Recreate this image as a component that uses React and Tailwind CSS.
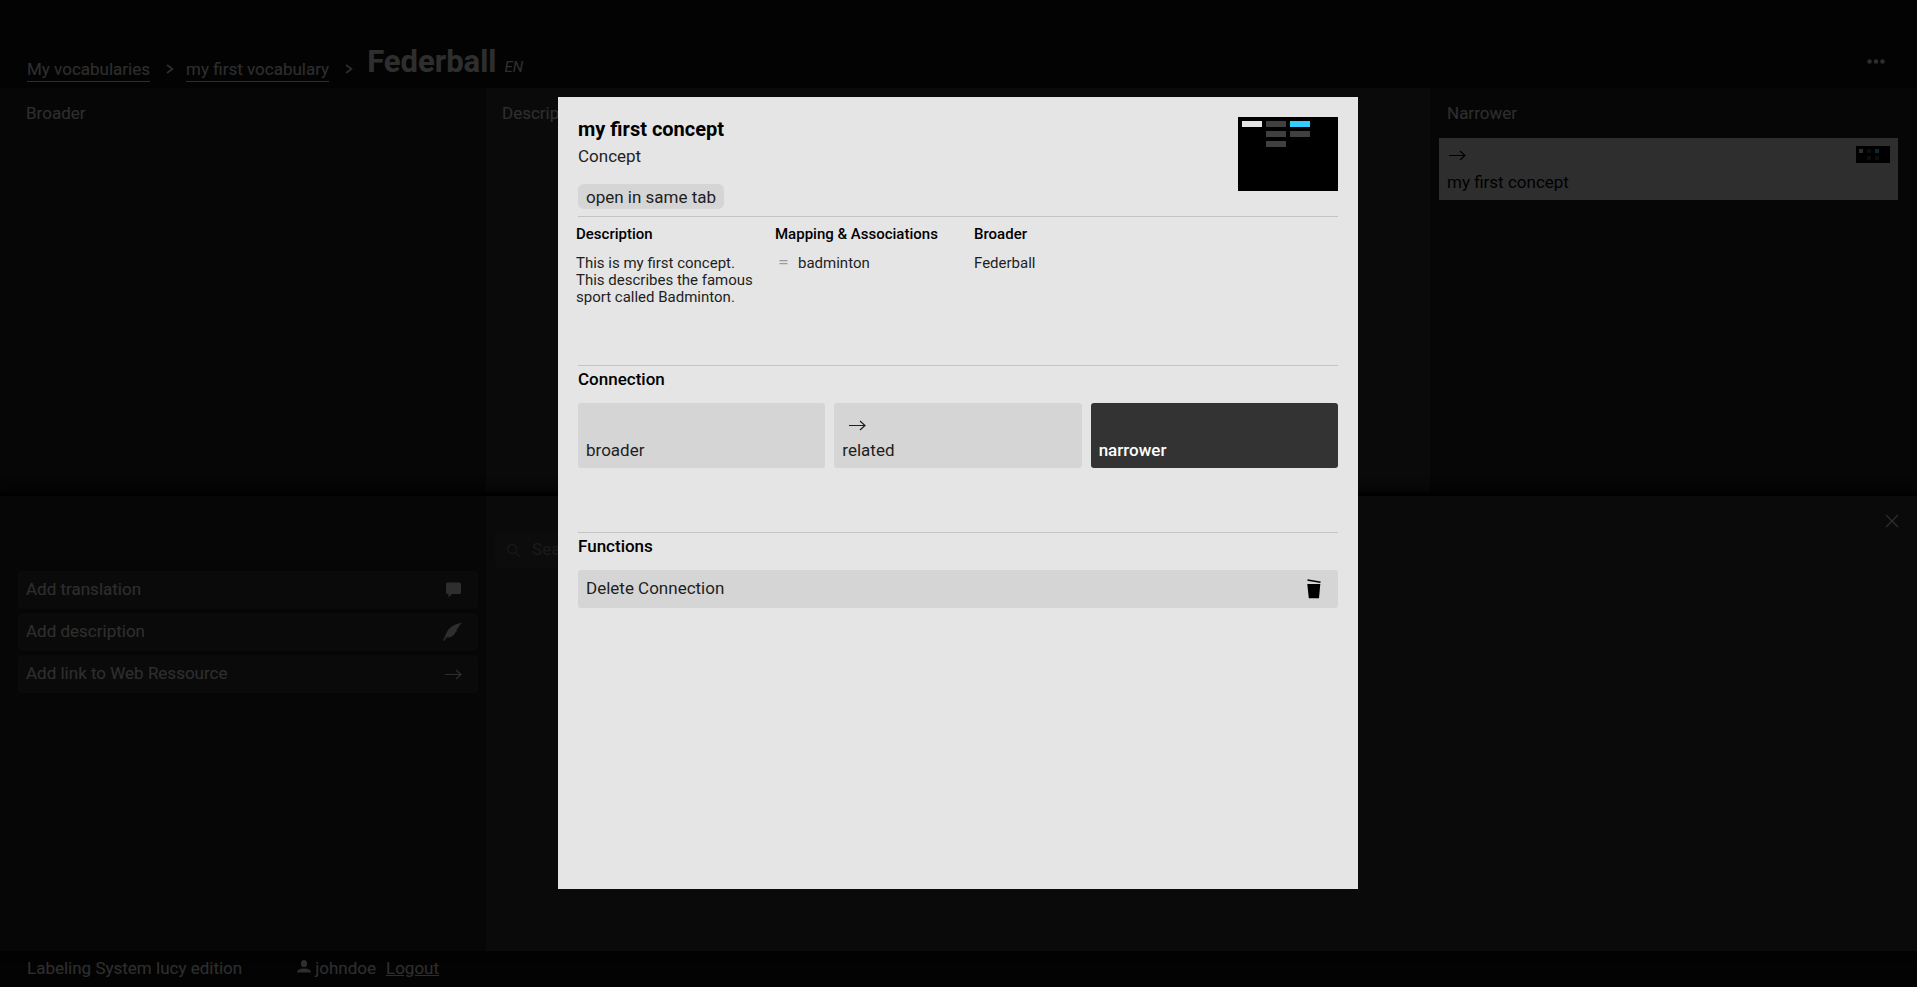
import React from "react";

const ArrowIcon = ({ className }) => (
  <svg className={className} viewBox="0 0 17 11" width="17" height="11" fill="none" stroke="currentColor" strokeWidth="1.2" aria-hidden="true">
    <path d="M0 5.500H16M11 1L16 5.500L11 10" />
  </svg>
);

const ChevronIcon = () => (
  <svg viewBox="0 0 8 10" width="8" height="10" fill="none" stroke="currentColor" strokeWidth="1.600" aria-hidden="true">
    <path d="M1 1L6.500 5L1 9" />
  </svg>
);

const BubbleIcon = () => (
  <svg viewBox="0 0 16 16" width="16" height="16" fill="currentColor" aria-hidden="true">
    <path d="M1.800 0.500H13.200Q15 0.500 15 2.300V10.200Q15 12 13.200 12H6L2.500 15.500V12H1.800Q0 12 0 10.200V2.300Q0 0.500 1.800 0.500Z" />
  </svg>
);

const FeatherIcon = () => (
  <svg viewBox="0 0 19 18" width="19" height="18" fill="currentColor" aria-hidden="true">
    <path d="M19 0C12 0.500 5.500 4.500 3 11C2.300 13.200 1 15.500 0 17.300L0.900 18L3.800 14.200C6.500 14.400 8.500 14.200 9.800 13L8.500 12.600C10 12.300 11.500 11.600 12.200 10.400L10.800 10.200C12.300 9.800 13.500 8.800 14.200 7.400L12.900 7.200C15.500 5.800 15.500 2.500 19 0Z" />
  </svg>
);

const UserIcon = () => (
  <svg className="mb-1" viewBox="0 0 14 13" width="14" height="13" fill="currentColor" aria-hidden="true">
    <ellipse cx="7" cy="3.700" rx="3" ry="3.600" />
    <path d="M0 12.500C0 9.800 3.500 8.600 7 8.600S14 9.800 14 12.500Z" />
  </svg>
);

const TrashIcon = () => (
  <svg viewBox="0 0 14 20" width="14" height="20" aria-hidden="true">
    <path d="M0.500 1L13.500 3.200" stroke="#000" strokeWidth="1.500" />
    <path d="M0.300 5H13.300L12 19.300H1.800Z" fill="#000" />
  </svg>
);

const actions = [
  { label: "Add translation", icon: <BubbleIcon /> },
  { label: "Add description", icon: <FeatherIcon /> },
  { label: "Add link to Web Ressource", icon: <ArrowIcon /> },
];

const sectionTitle = "border-t border-[#c3c3c3] pt-[3px] leading-5 font-medium text-black";
const relationButton = "flex h-[65px] flex-col items-start justify-end rounded-[3px] px-2 pb-1.5 leading-6";

function Vocabulary() {
  return (
    <div className="grid min-h-screen grid-rows-[88px_405fr_458fr_36px] bg-[#0f0f0f] text-[17px] text-[#e5e5e5]">
      <header className="flex items-end justify-between pr-8 pl-[27px]">
        <nav aria-label="Breadcrumb" className="flex items-end gap-4 pb-1.5">
          <a href="#vocabularies" className="border-b border-current leading-6">My vocabularies</a>
          <span className="pb-2"><ChevronIcon /></span>
          <a href="#vocabulary" className="-ml-1 border-b border-current leading-6">my first vocabulary</a>
          <span className="pb-2"><ChevronIcon /></span>
          <h1 className="-ml-0.5 flex items-baseline gap-2 pb-1 text-[31px] leading-8 font-bold">
            Federball <span className="text-[15px] leading-5 font-normal italic">EN</span>
          </h1>
        </nav>
        <button type="button" aria-label="More" className="mb-6">
          <svg viewBox="0 0 18 5" width="18" height="5" fill="currentColor">
            <circle cx="2.500" cy="2.500" r="2.200" /><circle cx="9" cy="2.500" r="2.200" /><circle cx="15.500" cy="2.500" r="2.200" />
          </svg>
        </button>
      </header>

      <main className="grid grid-cols-[486fr_944fr_487fr]">
        <section className="bg-[#1e1e1e] px-[26px] pt-[13px]">
          <h2 className="leading-6">Broader</h2>
        </section>
        <section className="bg-[#323232] px-4 pt-[13px]">
          <h2 className="leading-6">Description</h2>
        </section>
        <section className="bg-[#1e1e1e] pt-[13px] pr-[19px] pl-[9px]">
          <h2 className="pl-2 leading-6">Narrower</h2>
          <a href="#concept" className="mt-[13px] flex h-[62px] items-start justify-between bg-[#e5e5e5] p-2 text-black">
            <span className="flex flex-col gap-[9px] pt-1">
              <ArrowIcon className="ml-0.5" />
              <span className="leading-6">my first concept</span>
            </span>
            <svg viewBox="0 0 34 17" width="34" height="17" aria-hidden="true">
              <path fill="#000" d="M0 0H34V17H0Z" />
              <path fill="#e5e5e5" d="M3 3H7V7H3Z" />
              <path fill="#404040" d="M11 3H15V7H11ZM11 10H15V14H11ZM19 10H23V14H19Z" />
              <path fill="#33ccff" d="M19 3H23V7H19Z" />
            </svg>
          </a>
        </section>
      </main>

      <section className="grid grid-cols-[486fr_1431fr] border-t-3 border-black shadow-[0_-2px_10px_#000]">
        <div className="flex flex-col gap-1 bg-[#1e1e1e] pt-[75px] pr-2 pl-[18px]">
          {actions.map((a) => (
            <button key={a.label} type="button" className="flex h-[38px] items-center justify-between rounded-[3px] bg-[#323232] pr-4 pl-2">
              {a.label}
              {a.icon}
            </button>
          ))}
        </div>
        <div className="flex items-start justify-between bg-[#323232] pr-[18px] pl-[9px]">
          <label className="mt-9 flex h-9 w-96 items-center gap-3 rounded-[3px] bg-[#3c3c3c] px-3 text-[#808080]">
            <svg viewBox="0 0 14 15" width="14" height="15" fill="none" stroke="currentColor" strokeWidth="1.200" aria-hidden="true">
              <circle cx="5.500" cy="5.800" r="4.800" /><path d="M9 9.500L13.500 14.300" />
            </svg>
            <input type="search" aria-label="Search" placeholder="Search" className="w-full placeholder:text-[#808080]" />
          </label>
          <button type="button" aria-label="Close" className="mt-[18px]">
            <svg viewBox="0 0 14 14" width="14" height="14" stroke="currentColor" strokeWidth="1.200"><path d="M1 1L13 13M13 1L1 13" /></svg>
          </button>
        </div>
      </section>

      <footer className="flex items-center pb-0.5 pl-[27px] leading-6">
        <span>Labeling System lucy edition</span>
        <span className="ml-[55px] flex items-center gap-1"><UserIcon />johndoe</span>
        <a href="#logout" className="ml-2.5 underline">Logout</a>
      </footer>
    </div>
  );
}

function ConceptDialog() {
  return (
    <div className="fixed inset-0 flex items-center justify-center bg-black/80 pr-px pb-px">
      <div role="dialog" aria-modal="true" aria-labelledby="concept-title" className="h-[792px] w-[800px] bg-[#e5e5e5] p-5 text-[17px] text-[#1e1e1e]">
        <div className="flex items-start justify-between">
          <div className="flex flex-col items-start">
            <h2 id="concept-title" className="text-xl leading-6 font-bold text-black">my first concept</h2>
            <p className="mt-[3px] leading-6">Concept</p>
            <button type="button" className="mt-4 h-[25px] rounded-md bg-[#d5d5d5] px-2 leading-6">open in same tab</button>
          </div>
          <svg viewBox="0 0 100 74" width="100" height="74" aria-hidden="true">
            <path fill="#000" d="M0 0H100V74H0Z" />
            <path fill="#e5e5e5" d="M4 4H24V10H4Z" />
            <path fill="#404040" d="M28 4H48V10H28ZM28 14H48V20H28ZM28 24H48V30H28ZM52 14H72V20H52Z" />
            <path fill="#33ccff" d="M52 4H72V10H52Z" />
          </svg>
        </div>

        <div className="mt-[7px] border-t border-[#c3c3c3]">
          <div className="-mr-3.5 -ml-0.5 grid h-[148px] grid-cols-4 gap-5 pt-[9px] text-[15px] leading-[17px]">
            <section>
              <h3 className="mb-3 font-medium text-black">Description</h3>
              <p>This is my first concept. This describes the famous sport called Badminton.</p>
            </section>
            <section>
              <h3 className="mb-3 font-medium whitespace-nowrap text-black">Mapping &amp; Associations</h3>
              <p className="flex items-center gap-2.5 pl-1">
                <svg viewBox="0 0 9 7" width="9" height="7" fill="#999" aria-hidden="true"><path d="M0.500 0H8.500V1.200H0.500ZM0.500 3H8.500V4.200H0.500Z" /></svg>
                badminton
              </p>
            </section>
            <section>
              <h3 className="mb-3 font-medium text-black">Broader</h3>
              <p>Federball</p>
            </section>
          </div>
        </div>

        <section className="h-[167px]">
          <h3 className={sectionTitle}>Connection</h3>
          <div className="mt-3.5 grid grid-cols-3 gap-[9px]">
            <button type="button" className={`${relationButton} bg-[#d5d5d5]`}>broader</button>
            <button type="button" className={`${relationButton} bg-[#d5d5d5]`}>
              <ArrowIcon className="mb-[7px] ml-[7px]" />
              related
            </button>
            <button type="button" aria-pressed="true" className={`${relationButton} bg-[#333] font-medium text-white`}>narrower</button>
          </div>
        </section>

        <section>
          <h3 className={sectionTitle}>Functions</h3>
          <button type="button" className="mt-3.5 flex h-[38px] w-full items-center justify-between rounded-[3px] bg-[#d5d5d5] pr-[17px] pl-2">
            Delete Connection
            <TrashIcon />
          </button>
        </section>
      </div>
    </div>
  );
}

export default function App() {
  return (
    <div className="font-[Roboto,sans-serif]">
      <Vocabulary />
      <ConceptDialog />
    </div>
  );
}
